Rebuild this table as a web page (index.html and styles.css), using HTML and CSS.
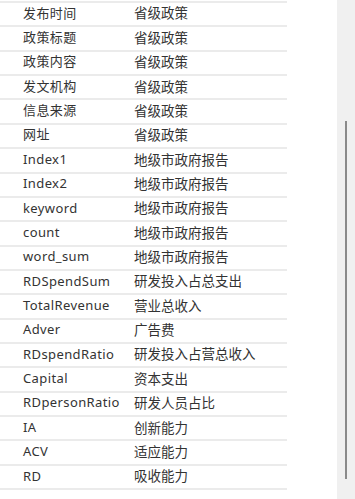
FILE: index.html
```html
<!DOCTYPE html>
<html lang="zh">
<head>
<meta charset="utf-8">
<link rel="stylesheet" href="styles.css">
</head>
<body>
<div class="page">
  <div class="table">
    <div class="row"><span class="k">发布时间</span><span class="v">省级政策</span></div>
    <div class="row"><span class="k">政策标题</span><span class="v">省级政策</span></div>
    <div class="row"><span class="k">政策内容</span><span class="v">省级政策</span></div>
    <div class="row"><span class="k">发文机构</span><span class="v">省级政策</span></div>
    <div class="row"><span class="k">信息来源</span><span class="v">省级政策</span></div>
    <div class="row"><span class="k">网址</span><span class="v">省级政策</span></div>
    <div class="row"><span class="k">Index1</span><span class="v">地级市政府报告</span></div>
    <div class="row"><span class="k">Index2</span><span class="v">地级市政府报告</span></div>
    <div class="row"><span class="k">keyword</span><span class="v">地级市政府报告</span></div>
    <div class="row"><span class="k">count</span><span class="v">地级市政府报告</span></div>
    <div class="row"><span class="k">word_sum</span><span class="v">地级市政府报告</span></div>
    <div class="row"><span class="k">RDSpendSum</span><span class="v">研发投入占总支出</span></div>
    <div class="row"><span class="k">TotalRevenue</span><span class="v">营业总收入</span></div>
    <div class="row"><span class="k">Adver</span><span class="v">广告费</span></div>
    <div class="row"><span class="k">RDspendRatio</span><span class="v">研发投入占营总收入</span></div>
    <div class="row"><span class="k">Capital</span><span class="v">资本支出</span></div>
    <div class="row"><span class="k">RDpersonRatio</span><span class="v">研发人员占比</span></div>
    <div class="row"><span class="k">IA</span><span class="v">创新能力</span></div>
    <div class="row"><span class="k">ACV</span><span class="v">适应能力</span></div>
    <div class="row last"><span class="k">RD</span><span class="v">吸收能力</span></div>
  </div>
  <div class="gap"></div>
  <div class="scrollbar"><div class="thumb"></div></div>
</div>
</body>
</html>
```
FILE: styles.css
```css
html, body {
  margin: 0;
  padding: 0;
  background: #fff;
}
.page {
  display: flex;
  width: 355px;
  height: 499px;
  overflow: hidden;
  font-family: "Noto Sans", "Noto Sans CJK SC", sans-serif;
  font-size: 13.5px;
  color: #333;
}
.table {
  width: 287px;
  padding-top: 1px;
  flex: none;
}
.row {
  display: flex;
  align-items: center;
  height: 22.36px;
  border-top: 2px solid #ebebeb;
  line-height: 1;
}
.row.last {
  border-bottom: 2px solid #ebebeb;
}
.k {
  width: 111px;
  padding-left: 23px;
  flex: none;
  margin-top: -2px;
  font-size: 13px;
  letter-spacing: 0.4px;
}
.v {
  font-family: "Noto Sans CJK SC", sans-serif;
  margin-top: -2px;
}
.gap {
  flex: 1;
}
.scrollbar {
  width: 18px;
  flex: none;
  background: #f0f0f0;
  padding-top: 121px;
  box-sizing: border-box;
}
.thumb {
  width: 2px;
  height: 358px;
  margin-left: 8px;
  background: #8a8a8a;
}
```
